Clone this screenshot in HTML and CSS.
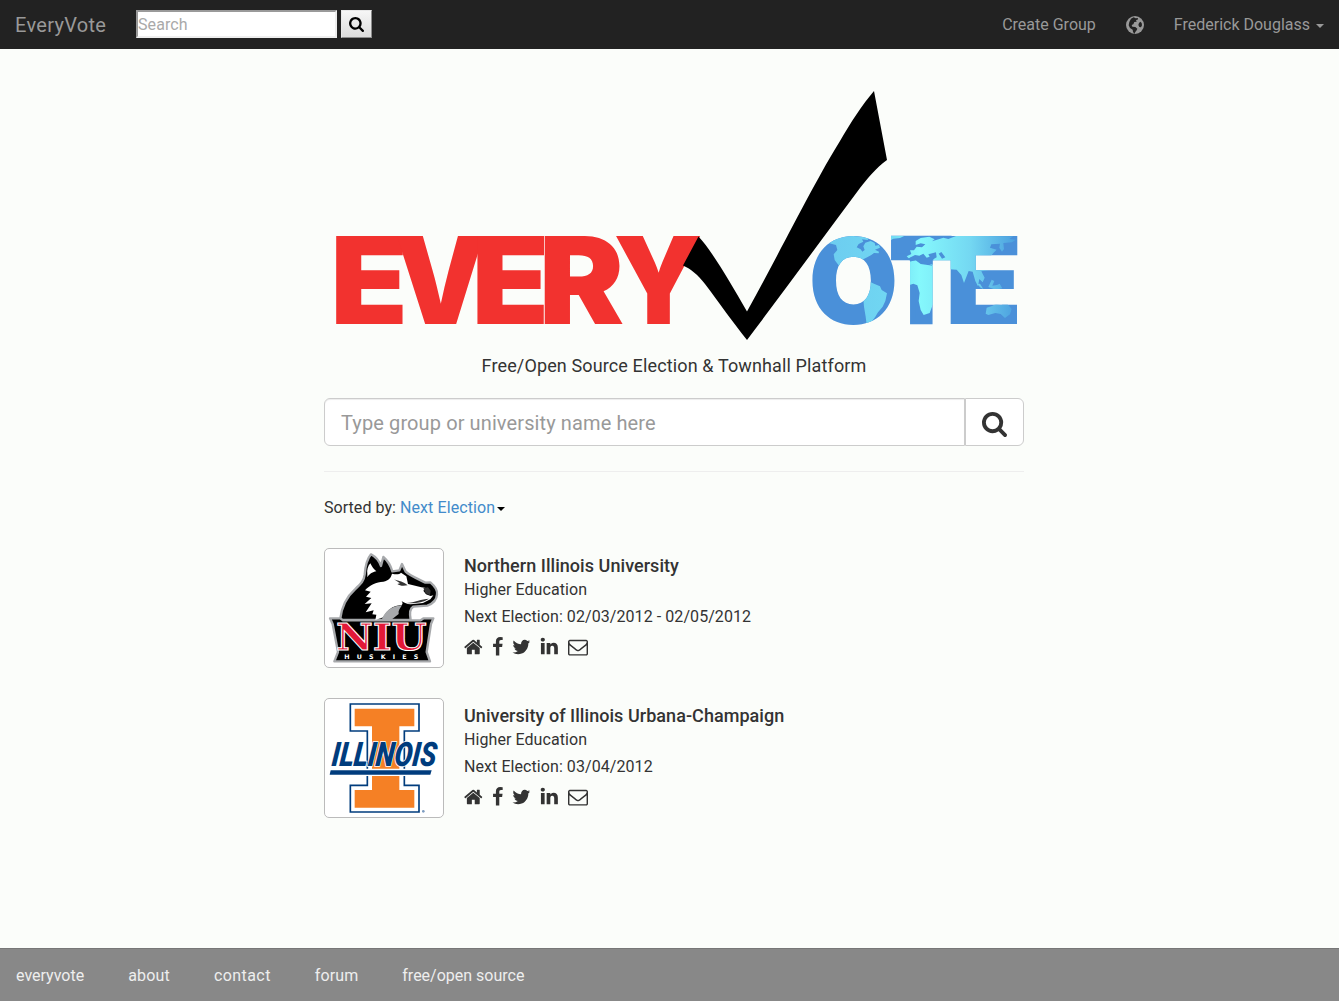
FILE: index.html
```html
<!DOCTYPE html>
<html lang="en">
<head>
<meta charset="utf-8">
<title>EveryVote</title>
<link rel="stylesheet" href="styles.css">
</head>
<body>
<svg class="sprite" aria-hidden="true">
  <symbol id="search" viewBox="0 0 1664 1664"><path d="M1152 704q0-185-131.5-316.5T704 256 387.5 387.5 256 704t131.5 316.5T704 1152t316.5-131.5T1152 704zm512 832q0 52-38 90t-90 38q-54 0-90-38l-343-342q-179 124-399 124-143 0-273.5-55.5t-225-150-150-225T0 704t55.5-273.5 150-225 225-150T704 0t273.5 55.5 225 150 150 225T1408 704q0 220-124 399l343 343q37 37 37 90z"/></symbol>
  <symbol id="home" viewBox="64 0 1664 1792"><path d="M1472 992v480q0 26-19 45t-45 19h-384v-384h-256v384h-384q-26 0-45-19t-19-45v-480q0-1 .5-3t.5-3l575-474 575 474q1 2 1 6zm223-69l-62 74q-8 9-21 11h-3q-13 0-21-7l-692-577-692 577q-12 8-24 7-13-2-21-11l-62-74q-8-10-7-23.5t11-21.5l719-599q32-26 76-26t76 26l244 204v-195q0-14 9-23t23-9h192q14 0 23 9t9 23v408l219 182q10 8 11 21.5t-7 23.5z"/></symbol>
  <symbol id="facebook" viewBox="384 0 1024 1792"><path d="M1343 12v264h-157q-86 0-116 36t-30 108v189h293l-39 296h-254v759h-306v-759h-255v-296h255v-218q0-186 104-288.5t277-102.5q147 0 228 12z"/></symbol>
  <symbol id="twitter" viewBox="64 0 1664 1792"><path d="M1684 408q-67 98-162 167 1 14 1 42 0 130-38 259.5t-115.5 248.5-184.5 210.5-258 146-323 54.5q-271 0-496-145 35 4 78 4 225 0 401-138-105-2-188-64.5t-114-159.5q33 5 61 5 43 0 85-11-112-23-185.5-111.5t-73.5-205.5v-4q68 38 146 41-66-44-105-115t-39-154q0-88 44-163 121 149 294.5 238.500t371.500 99.500q-8-38-8-74 0-134 94.500-228.500t228.500-94.500q140 0 236 102 109-21 205-78-37 115-142 178 93-10 186-50z"/></symbol>
  <symbol id="linkedin" viewBox="64 80 1664 1792"><path d="M477 625v991h-330v-991h330zm21-306q1 73-50.5 122t-135.5 49h-2q-82 0-132-49t-50-122q0-74 51.5-122.5t134.5-48.5 133 48.5 51 122.5zm1166 729v568h-329v-530q0-105-40.5-164.5t-126.5-59.5q-63 0-105.5 34.5t-63.5 85.5q-11 30-11 81v553h-329q2-399 2-647t-1-296l-1-48h329v144h-2q20-32 41-56t56.5-52 87-43.5 114.5-15.5q171 0 275 113.5t104 332.5z"/></symbol>
  <symbol id="mail" viewBox="0 0 1792 1792"><path d="M1664 1504v-768q-32 36-69 66-268 206-426 338-51 43-83 67t-86.5 48.5-102.5 24.5h-2q-48 0-102.5-24.5t-86.5-48.5-83-67q-158-132-426-338-37-30-69-66v768q0 13 9.5 22.5t22.5 9.5h1472q13 0 22.5-9.5t9.5-22.5zm0-1051v-24.5l-.5-13-3-12.5-5.5-9-9-7.5-14-2.5h-1472q-13 0-22.5 9.5t-9.5 22.5q0 168 147 284 193 152 401 317 6 5 35 29.5t46 37.5 44.5 31.5 50.5 27.5 43 9h2q20 0 43-9t50.5-27.5 44.5-31.5 46-37.5 35-29.5q208-165 401-317 54-43 100.5-115.5t46.5-131.5zm128-37v1088q0 66-47 113t-113 47h-1472q-66 0-113-47t-47-113v-1088q0-66 47-113t113-47h1472q66 0 113 47t47 113z"/></symbol>
</svg>

<nav class="navbar">
  <a class="brand">EveryVote</a>
  <form class="nav-search">
    <input type="text" placeholder="Search">
    <button type="button"><svg class="icon-search-sm"><use href="#search"/></svg></button>
  </form>
  <div class="nav-links">
    <a>Create Group</a>
    <a class="globe"><svg viewBox="0 0 54 54"><circle cx="27" cy="27" r="27" fill="#999"/><path fill="#222" d="M15 8l8-4 6 3 7-1-1 5-5 1 2 5-7 1-3 7-5 2 2 5 9 1 6 5-2 5-4 5-3 6-4-7-1-6-8-5-4-8 2-10zM43 17l4 4 1 7-3 6-5-1-3-6 2-6z"/></svg></a>
    <a>Frederick Douglass <span class="caret"></span></a>
  </div>
</nav>

<main class="page">
  <svg class="logo" viewBox="324 84 700 262" role="img" aria-label="EveryVote">
    <defs>
      <g id="ote" stroke-linejoin="miter">
        <text transform="translate(808.5 324) scale(1.16 1.2)">O</text>
        <text class="thick" transform="translate(891.3 321) scale(.875 1.128)">T</text>
        <text transform="translate(944.7 324) scale(1.27 1.21)">E</text>
      </g>
      <mask id="ote-mask" maskUnits="userSpaceOnUse" x="800" y="220" width="230" height="120"><use href="#ote" fill="#fff" stroke="#fff"/></mask>
      <linearGradient id="sea" gradientUnits="userSpaceOnUse" x1="90" y1="0" x2="650" y2="0">
        <stop offset="0" stop-color="#6dcdf0"/><stop offset=".3" stop-color="#70d6f2"/><stop offset=".48" stop-color="#85f8fc"/><stop offset=".75" stop-color="#74d8f2"/><stop offset="1" stop-color="#4a9ede"/>
      </linearGradient>
    </defs>
    <g fill="#f2322f">
      <text transform="translate(330.2 324) scale(1.27 1.21)">E</text>
      <text transform="translate(394.6 324) scale(1.15 1.21)">V</text>
      <text transform="translate(471.5 324) scale(1.27 1.21)">E</text>
      <text transform="translate(538.8 324) scale(1.28 1.21)">R</text>
      <text transform="translate(613.5 324) scale(1.15 1.21)">Y</text>
    </g>
    <path fill="#000" d="M698.5 236.500C712 251 730 282 747 311.500C780 252 815 181 840 141C851 122 862 105 874 91L887 160C876 168 868 178 860 188C822 239 784 291 747 340C732 321 720 304 705 284C698 275 691 269 683 265.500z"/>
    <use href="#ote" fill="#4a90d9" stroke="#4a90d9"/>
    <g mask="url(#ote-mask)"><g transform="translate(800 225) scale(.33333)" fill="url(#sea)">
      <path d="M82 53L108 40 150 32 188 35 206 39 203 45 186 43 190 50 176 57 170 67 182 73 187 80 194 75 190 64 196 53 212 48 224 54 226 62 237 60 240 68 225 74 237 80 236 85 222 84 214 90 203 96 190 103 180 110 130 160 122 142 118 124 104 105 101 88 112 75 108 60z"/>
      <path d="M185 164L203 167 222 176 240 184 245 195 261 205 256 228 248 245 234 262 226 275 215 290 200 299 197 275 192 245z"/>
      <path d="M272 32h42l-14 7-20 2-8 5z"/>
      <path d="M326 100L320 94 334 87 330 76 342 76 350 65 366 67 376 58 362 55 347 60 347 48 362 39 388 35 404 43 396 49 416 43 430 38 445 42 470 32 640 34 628 42 648 44 636 52 610 54 612 72 606 80 598 68 600 56 574 58 570 68 590 74 580 84 570 97 578 108 562 105 572 122 564 136 544 139 554 158 548 172 538 162 534 184 526 168 518 140 506 138 492 174 484 150 470 134 440 132 402 126 395 120 376 112 350 104 350 94z"/>
      <path d="M322 108L347 106 362 117 404 123 407 220 398 240 389 264 371 270 362 255 356 228 359 204 352 181 340 176 322 182z"/>
      <path d="M557 266L560 248 576 243 588 236 604 240 610 234 620 234 635 252 630 268 615 279 602 267 586 264 565 270zM532 178l10 10 8 4-10-16zM565 186l10-22 8 4-6 14 14-2 8-4 8 14-20 4z"/>
      <path fill="#4a90d9" d="M329 98L345 90 358 92 370 86 380 98 389 95 385 88 408 82 410 97 400 103 404 119 382 117 362 112 350 105 328 110zM374 94l8 9-5 2-8-10zM416 86l8-5 12 16-10 4z"/>
    </g></g>
  </svg>

  <p class="tagline">Free/Open Source Election &amp; Townhall Platform</p>

  <form class="group-search">
    <input type="text" placeholder="Type group or university name here">
    <button type="button"><svg class="icon-search-lg"><use href="#search"/></svg></button>
  </form>
  <hr>
  <p class="sort">Sorted by: <a>Next Election</a><span class="caret"></span></p>

  <section class="group">
    <div class="thumb">
      <svg viewBox="15 27 354 354">
        <g stroke="#a7a9ac" stroke-width="7" stroke-linejoin="round" fill="#000">
          <path d="M60 240C64 205 80 170 105 148C124 130 132 122 134 104C136 76 142 56 153 43C166 50 177 62 183 78L190 51C203 62 212 77 217 94L238 91 246 72 257 95C268 106 292 116 316 128L331 127C344 138 353 150 351 163C350 181 340 190 322 197L280 200C270 205 268 218 272 240z"/>
          <path d="M30 235H61L69 241H302L311 235H340L333 252 320 336 330 364H43L54 336 38 252z"/>
        </g>
        <path fill="#fff" d="M142 102C140 90 144 77 151 70C155 79 163 90 169 94C158 96 150 100 142 112zM135 151C148 136 169 126 190 125C207 122 213 112 216 101C228 104 238 104 243 98L259 109 264 132 304 142 318 144 310 152 318 163 332 168 340 166 331 178 309 189 272 193C260 192 250 187 244 182C250 189 249 195 239 196C216 198 202 211 190 232L166 240 169 224 157 223 161 211 137 217 155 190 134 192 154 174 138 170 152 155z"/>
        <path d="M222 118C238 124 250 125 263 136C250 138 240 138 232 132L240 130zM310 145L324 142 332 152 330 166 317 160zM258 189C286 188 304 176 327 176C306 189 284 191 258 189z"/>
        <path fill="#a7a9ac" d="M186 237C195 216 210 199 246 196C240 205 234 212 236 222L216 238z"/>
        <text class="niu" x="48" y="329" fill="#e31837" stroke="#fff" stroke-width="3" textLength="272" lengthAdjust="spacingAndGlyphs">NIU</text>
        <text class="huskies" x="73" y="356" fill="#fff" textLength="222">HUSKIES</text>
      </svg>
    </div>
    <div class="info">
      <h2>Northern Illinois University</h2>
      <p class="kind">Higher Education</p>
      <p class="next">Next Election: 02/03/2012 - 02/05/2012</p>
      <div class="links">
        <svg class="w-lg"><use href="#home"/></svg><svg class="w-sm"><use href="#facebook"/></svg><svg class="w-lg"><use href="#twitter"/></svg><svg class="w-lg"><use href="#linkedin"/></svg><svg class="w-xl"><use href="#mail"/></svg>
      </div>
    </div>
  </section>

  <section class="group">
    <div class="thumb">
      <svg viewBox="15 21 354 354">
        <path fill="#fff" stroke="#003c7d" stroke-width="5" d="M91 36H297V117H253V280H297V360H91V280H142V117H91z"/>
        <path fill="#f58025" d="M104 50H283V103H238V294H283V347H104V294H156V103H104z"/>
        <path fill="#fff" d="M27 230H337L333 252H25z"/>
        <path fill="#003c7d" d="M32 235H335L331 248H29z"/>
        <text class="illinois" fill="#003c7d" stroke="#fff" stroke-width="5" paint-order="stroke" transform="translate(33 222) skewX(-6)" textLength="314" lengthAdjust="spacingAndGlyphs">ILLINOIS</text>
        <circle cx="310" cy="358" r="4" fill="#7d9cc0"/>
      </svg>
    </div>
    <div class="info">
      <h2>University of Illinois Urbana-Champaign</h2>
      <p class="kind">Higher Education</p>
      <p class="next">Next Election: 03/04/2012</p>
      <div class="links">
        <svg class="w-lg"><use href="#home"/></svg><svg class="w-sm"><use href="#facebook"/></svg><svg class="w-lg"><use href="#twitter"/></svg><svg class="w-lg"><use href="#linkedin"/></svg><svg class="w-xl"><use href="#mail"/></svg>
      </div>
    </div>
  </section>
</main>

<footer class="footer">
  <a>everyvote</a><a>about</a><a class="contact">contact</a><a>forum</a><a>free/open source</a>
</footer>
</body>
</html>
```
FILE: styles.css
```css
* { box-sizing: border-box; }

body {
  margin: 0;
  min-height: 1001px;
  display: flex;
  flex-direction: column;
  background: #fbfdfa;
  color: #333;
  font: 16px/24px Roboto, "Liberation Sans", sans-serif;
}

h2, p { margin: 0; }
svg { display: block; fill: currentColor; }
.sprite { display: none; }

.navbar {
  height: 49px;
  display: flex;
  align-items: center;
  padding: 0 15px;
  background: #222;
  color: #999;
}
.brand { width: 121px; padding-top: 1px; font-size: 20px; letter-spacing: .3px; }

.nav-search { display: flex; gap: 4px; margin-top: -1px; }
.nav-search input {
  width: 201px;
  height: 28px;
  padding: 0;
  border: 2px solid;
  border-color: #9a9a9a #eee #eee #9a9a9a;
  background: #fff;
  font: inherit;
}
.nav-search input::placeholder { color: #a9a9a9; letter-spacing: .1px; }
.nav-search button {
  width: 31px;
  height: 28px;
  display: grid;
  place-items: center;
  padding: 0;
  border: 1px solid;
  border-color: #e8e8e8 #8c8c8c #8c8c8c #e8e8e8;
  background: linear-gradient(#f6f6f6, #dcdcdc);
  color: #000;
}
.icon-search-sm { width: 15px; height: 15px; }

.nav-links { margin-left: auto; padding-top: 1px; display: flex; align-items: center; gap: 30px; }
.globe svg { width: 18px; height: 18px; margin-top: -1px; }

.caret {
  display: inline-block;
  margin-left: 2px;
  vertical-align: middle;
  border: 4px solid transparent;
  border-top-color: currentColor;
  border-bottom: 0;
}

.page { width: 700px; margin: 35px auto 0; flex: 1; position: relative; left: 4.5px; }

.logo { width: 700px; height: 262px; font: 900 100px Inter, sans-serif; }
.logo text { stroke-width: 0; }
.logo .thick { stroke-width: 6px; vector-effect: non-scaling-stroke; }

.tagline { padding-top: 8px; text-align: center; font-size: 18px; letter-spacing: .13px; }

.group-search { display: flex; height: 48px; margin-top: 20px; }
.group-search input {
  flex: 1;
  padding: 2px 16px 0;
  border: 1px solid #ccc;
  border-radius: 6px 0 0 6px;
  background: #fff;
  box-shadow: inset 0 1px 1px rgba(0, 0, 0, .075);
  font: 20px Roboto, sans-serif;
}
.group-search input::placeholder { color: #999; letter-spacing: .11px; }
.group-search button {
  width: 59px;
  display: grid;
  place-items: center;
  padding: 4px 0 0;
  border: 1px solid #ccc;
  border-radius: 0 6px 6px 0;
  background: #fff;
  color: #333;
}
.icon-search-lg { width: 25px; height: 25px; }

hr { margin: 25px 0 0; border: 0; border-top: 1px solid #eee; }

.sort { margin-top: 24px; letter-spacing: .05px; }
.sort a { color: #428bca; letter-spacing: .09px; }
.sort .caret { color: #000; }

.group { display: flex; gap: 20px; margin-top: 30px; }
.sort + .group { margin-top: 28px; }
.thumb {
  width: 120px;
  height: 120px;
  border: 1px solid #bbb;
  border-radius: 5px;
  background: #fff;
}
.thumb svg { width: 118px; height: 118px; }
.niu { font: 700 110px "DejaVu Serif", serif; }
.huskies { font: 700 19px "DejaVu Sans", sans-serif; }
.illinois { font: italic 900 101px Roboto, sans-serif; }

.info { padding-top: 5px; }
.info h2 { font-size: 18px; font-weight: 500; line-height: 25px; letter-spacing: .05px; }
.kind { margin-top: 1px; line-height: 22px; letter-spacing: .07px; }
.next { margin-top: 4px; letter-spacing: .07px; }
.links { display: flex; gap: 9.2px; margin-top: 8px; }
.links svg { height: 20px; }
.w-sm { width: 11.4px; }
.w-lg { width: 18.6px; }
.w-xl { width: 20px; }

.footer {
  height: 53px;
  display: flex;
  align-items: center;
  gap: 44px;
  padding: 2px 16px 0;
  background: #888;
  border-top: 1px solid #777;
  color: #eee;
}
.footer a:nth-child(2) { letter-spacing: .2px; }
.footer .contact { letter-spacing: .42px; }
.footer a:nth-child(4) { letter-spacing: .1px; }
```
